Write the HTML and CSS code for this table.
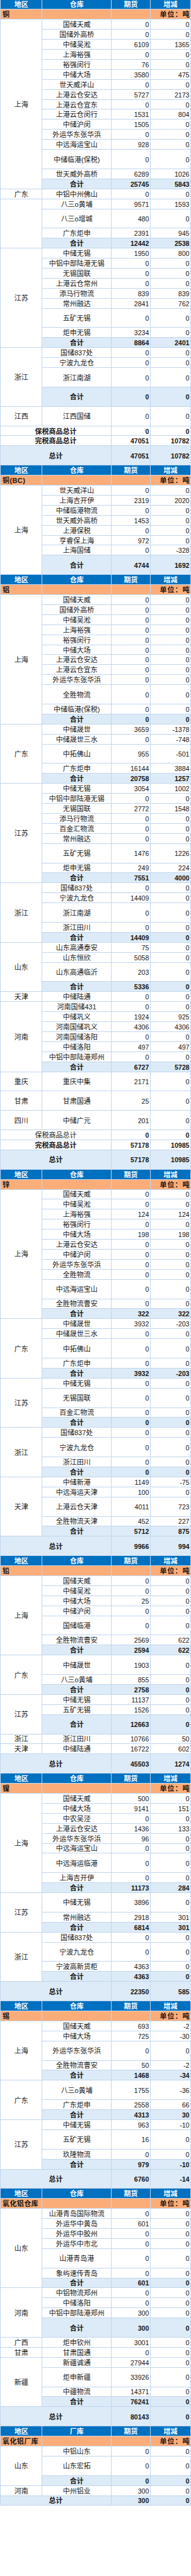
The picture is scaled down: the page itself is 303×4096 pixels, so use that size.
FILE: index.html
```html
<!DOCTYPE html>
<html lang="zh-CN">
<head>
<meta charset="utf-8">
<title>库存</title>
<link rel="stylesheet" href="styles.css">
</head>
<body>
<table class="t">
<colgroup><col class="c1"><col class="c2"><col class="c3"><col class="c4"></colgroup>
<tbody>
<tr class="h"><th>地区</th><th>仓库</th><th>期货</th><th>增减</th></tr>
<tr class="ti"><td class="tl">铜</td><td></td><td></td><td class="u">单位：吨</td></tr>
<tr><td class="r" rowspan="16">上海</td><td class="w">国储天威</td><td>0</td><td>0</td></tr>
<tr><td class="w">国储外高桥</td><td>0</td><td>0</td></tr>
<tr><td class="w">中储吴淞</td><td>6109</td><td>1365</td></tr>
<tr><td class="w">上海裕强</td><td>0</td><td>0</td></tr>
<tr><td class="w">裕强闵行</td><td>76</td><td>0</td></tr>
<tr><td class="w">中储大场</td><td>3580</td><td>475</td></tr>
<tr><td class="w">世天威洋山</td><td>0</td><td>0</td></tr>
<tr><td class="w">上港云仓安达</td><td>5727</td><td>2173</td></tr>
<tr><td class="w">上港云仓宜东</td><td>0</td><td>0</td></tr>
<tr><td class="w">上港云仓闵行</td><td>1531</td><td>804</td></tr>
<tr><td class="w">中储沪闵</td><td>1505</td><td>0</td></tr>
<tr><td class="w">外运华东张华浜</td><td>0</td><td>0</td></tr>
<tr><td class="w">中远海运宝山</td><td>928</td><td>0</td></tr>
<tr class="x"><td class="w">中储临港(保税)</td><td>0</td><td>0</td></tr>
<tr><td class="w">世天威外高桥</td><td>6289</td><td>1026</td></tr>
<tr class="s"><td class="w">合计</td><td>25745</td><td>5843</td></tr>
<tr><td class="r">广东</td><td class="w">中铝中州佛山</td><td>0</td><td>0</td></tr>
<tr><td class="r" rowspan="4"></td><td class="w">八三o黄埔</td><td>9571</td><td>1593</td></tr>
<tr class="x"><td class="w">八三o增城</td><td>480</td><td>0</td></tr>
<tr><td class="w">广东炬申</td><td>2391</td><td>945</td></tr>
<tr class="s"><td class="w">合计</td><td>12442</td><td>2538</td></tr>
<tr><td class="r" rowspan="9">江苏</td><td class="w">中储无锡</td><td>1950</td><td>800</td></tr>
<tr><td class="w">中铝中部陆港无锡</td><td>0</td><td>0</td></tr>
<tr><td class="w">无锡国联</td><td>0</td><td>0</td></tr>
<tr><td class="w">上港云仓常州</td><td>0</td><td>0</td></tr>
<tr><td class="w">添马行物流</td><td>839</td><td>839</td></tr>
<tr><td class="w">常州融达</td><td>2841</td><td>762</td></tr>
<tr class="x"><td class="w">五矿无锡</td><td>0</td><td>0</td></tr>
<tr><td class="w">炬申无锡</td><td>3234</td><td>0</td></tr>
<tr class="s"><td class="w">合计</td><td>8864</td><td>2401</td></tr>
<tr><td class="r" rowspan="4">浙江</td><td class="w">国储837处</td><td>0</td><td>0</td></tr>
<tr><td class="w">宁波九龙仓</td><td>0</td><td>0</td></tr>
<tr class="x"><td class="w">浙江南湖</td><td>0</td><td>0</td></tr>
<tr class="s x"><td class="w">合计</td><td>0</td><td>0</td></tr>
<tr class="x"><td class="r">江西</td><td class="w">江西国储</td><td>0</td><td>0</td></tr>
<tr class="b"><td class="w" colspan="2">保税商品总计</td><td>0</td><td>0</td></tr>
<tr class="b"><td class="w" colspan="2">完税商品总计</td><td>47051</td><td>10782</td></tr>
<tr class="z x"><td class="w" colspan="2">总计</td><td>47051</td><td>10782</td></tr>

<tr class="h"><th>地区</th><th>仓库</th><th>期货</th><th>增减</th></tr>
<tr class="ti"><td class="tl">铜(BC)</td><td></td><td></td><td class="u">单位：吨</td></tr>
<tr><td class="r" rowspan="8">上海</td><td class="w">世天威洋山</td><td>0</td><td>0</td></tr>
<tr><td class="w">上海吉开伊</td><td>2319</td><td>2020</td></tr>
<tr><td class="w">中储临港物流</td><td>0</td><td>0</td></tr>
<tr><td class="w">世天威外高桥</td><td>1453</td><td>0</td></tr>
<tr><td class="w">上港保税</td><td>0</td><td>0</td></tr>
<tr><td class="w">亨睿保上海</td><td>972</td><td>0</td></tr>
<tr><td class="w">上海国储</td><td>0</td><td>-328</td></tr>
<tr class="s x"><td class="w">合计</td><td>4744</td><td>1692</td></tr>

<tr class="h"><th>地区</th><th>仓库</th><th>期货</th><th>增减</th></tr>
<tr class="ti"><td class="tl">铝</td><td></td><td></td><td class="u">单位：吨</td></tr>
<tr><td class="r" rowspan="12">上海</td><td class="w">国储天威</td><td>0</td><td>0</td></tr>
<tr><td class="w">国储外高桥</td><td>0</td><td>0</td></tr>
<tr><td class="w">中储吴淞</td><td>0</td><td>0</td></tr>
<tr><td class="w">上海裕强</td><td>0</td><td>0</td></tr>
<tr><td class="w">裕强闵行</td><td>0</td><td>0</td></tr>
<tr><td class="w">中储大场</td><td>0</td><td>0</td></tr>
<tr><td class="w">上港云仓安达</td><td>0</td><td>0</td></tr>
<tr><td class="w">上港云仓宜东</td><td>0</td><td>0</td></tr>
<tr><td class="w">外运华东张华浜</td><td>0</td><td>0</td></tr>
<tr class="x"><td class="w">全胜物流</td><td>0</td><td>0</td></tr>
<tr><td class="w">中储临港(保税)</td><td>0</td><td>0</td></tr>
<tr class="s"><td class="w">合计</td><td>0</td><td>0</td></tr>
<tr><td class="r" rowspan="5">广东</td><td class="w">中储晟世</td><td>3659</td><td>-1378</td></tr>
<tr><td class="w">中储晟世三水</td><td>0</td><td>-748</td></tr>
<tr class="x"><td class="w">中拓佛山</td><td>955</td><td>-501</td></tr>
<tr><td class="w">广东炬申</td><td>16144</td><td>3884</td></tr>
<tr class="s"><td class="w">合计</td><td>20758</td><td>1257</td></tr>
<tr><td class="r" rowspan="9">江苏</td><td class="w">中储无锡</td><td>3054</td><td>1002</td></tr>
<tr><td class="w">中铝中部陆港无锡</td><td>0</td><td>0</td></tr>
<tr><td class="w">无锡国联</td><td>2772</td><td>1548</td></tr>
<tr><td class="w">添马行物流</td><td>0</td><td>0</td></tr>
<tr><td class="w">百金汇物流</td><td>0</td><td>0</td></tr>
<tr><td class="w">常州融达</td><td>0</td><td>0</td></tr>
<tr class="x"><td class="w">五矿无锡</td><td>1476</td><td>1226</td></tr>
<tr><td class="w">炬申无锡</td><td>249</td><td>224</td></tr>
<tr class="s"><td class="w">合计</td><td>7551</td><td>4000</td></tr>
<tr><td class="r" rowspan="5">浙江</td><td class="w">国储837处</td><td>0</td><td>0</td></tr>
<tr><td class="w">宁波九龙仓</td><td>14409</td><td>0</td></tr>
<tr class="x"><td class="w">浙江南湖</td><td>0</td><td>0</td></tr>
<tr><td class="w">浙江田川</td><td>0</td><td>0</td></tr>
<tr class="s"><td class="w">合计</td><td>14409</td><td>0</td></tr>
<tr><td class="r" rowspan="4">山东</td><td class="w">山东高通泰安</td><td>75</td><td>0</td></tr>
<tr><td class="w">山东恒欣</td><td>5058</td><td>0</td></tr>
<tr class="x"><td class="w">山东高通临沂</td><td>203</td><td>0</td></tr>
<tr class="s"><td class="w">合计</td><td>5336</td><td>0</td></tr>
<tr><td class="r">天津</td><td class="w">中储陆通</td><td>0</td><td>0</td></tr>
<tr><td class="r" rowspan="7">河南</td><td class="w">河南国储431</td><td>0</td><td>0</td></tr>
<tr><td class="w">中储巩义</td><td>1924</td><td>925</td></tr>
<tr><td class="w">河南国储巩义</td><td>4306</td><td>4306</td></tr>
<tr><td class="w">河南国储洛阳</td><td>0</td><td>0</td></tr>
<tr><td class="w">中储洛阳</td><td>497</td><td>497</td></tr>
<tr><td class="w">中铝中部陆港郑州</td><td>0</td><td>0</td></tr>
<tr class="s"><td class="w">合计</td><td>6727</td><td>5728</td></tr>
<tr class="x"><td class="r">重庆</td><td class="w">重庆中集</td><td>2171</td><td>0</td></tr>
<tr class="x"><td class="r">甘肃</td><td class="w">甘肃国通</td><td>25</td><td>0</td></tr>
<tr class="x"><td class="r">四川</td><td class="w">中储广元</td><td>201</td><td>0</td></tr>
<tr class="b"><td class="w nb" colspan="2">保税商品总计</td><td>0</td><td>0</td></tr>
<tr class="b"><td class="w" colspan="2">完税商品总计</td><td>57178</td><td>10985</td></tr>
<tr class="z x"><td class="w" colspan="2">总计</td><td>57178</td><td>10985</td></tr>

<tr class="h"><th>地区</th><th>仓库</th><th>期货</th><th>增减</th></tr>
<tr class="ti"><td class="tl">锌</td><td></td><td></td><td class="u">单位：吨</td></tr>
<tr><td class="r" rowspan="12">上海</td><td class="w">国储天威</td><td>0</td><td>0</td></tr>
<tr><td class="w">中储吴淞</td><td>0</td><td>0</td></tr>
<tr><td class="w">上海裕强</td><td>124</td><td>124</td></tr>
<tr><td class="w">裕强闵行</td><td>0</td><td>0</td></tr>
<tr><td class="w">中储大场</td><td>198</td><td>198</td></tr>
<tr><td class="w">上港云仓安达</td><td>0</td><td>0</td></tr>
<tr><td class="w">中储沪闵</td><td>0</td><td>0</td></tr>
<tr><td class="w">外运华东张华浜</td><td>0</td><td>0</td></tr>
<tr><td class="w">全胜物流</td><td>0</td><td>0</td></tr>
<tr class="x"><td class="w">中远海运宝山</td><td>0</td><td>0</td></tr>
<tr><td class="w">全胜物流曹安</td><td>0</td><td>0</td></tr>
<tr class="s"><td class="w">合计</td><td>322</td><td>322</td></tr>
<tr><td class="r" rowspan="5">广东</td><td class="w">中储晟世</td><td>3932</td><td>-203</td></tr>
<tr><td class="w">中储晟世三水</td><td>0</td><td>0</td></tr>
<tr class="x"><td class="w">中拓佛山</td><td>0</td><td>0</td></tr>
<tr><td class="w">广东炬申</td><td>0</td><td>0</td></tr>
<tr class="s"><td class="w">合计</td><td>3932</td><td>-203</td></tr>
<tr><td class="r" rowspan="4">江苏</td><td class="w">中储无锡</td><td>0</td><td>0</td></tr>
<tr class="x"><td class="w">无锡国联</td><td>0</td><td>0</td></tr>
<tr><td class="w">百金汇物流</td><td>0</td><td>0</td></tr>
<tr class="s"><td class="w">合计</td><td>0</td><td>0</td></tr>
<tr><td class="r" rowspan="4">浙江</td><td class="w">国储837处</td><td>0</td><td>0</td></tr>
<tr class="x"><td class="w">宁波九龙仓</td><td>0</td><td>0</td></tr>
<tr><td class="w">浙江田川</td><td>0</td><td>0</td></tr>
<tr class="s"><td class="w">合计</td><td>0</td><td>0</td></tr>
<tr><td class="r" rowspan="5">天津</td><td class="w">中储新港</td><td>1149</td><td>-75</td></tr>
<tr><td class="w">中远海运天津</td><td>100</td><td>0</td></tr>
<tr class="x"><td class="w">上港云仓天津</td><td>4011</td><td>723</td></tr>
<tr><td class="w">全胜物流天津</td><td>452</td><td>227</td></tr>
<tr class="s"><td class="w">合计</td><td>5712</td><td>875</td></tr>
<tr class="z x"><td class="w" colspan="2">总计</td><td>9966</td><td>994</td></tr>

<tr class="h"><th>地区</th><th>仓库</th><th>期货</th><th>增减</th></tr>
<tr class="ti"><td class="tl">铅</td><td></td><td></td><td class="u">单位：吨</td></tr>
<tr><td class="r" rowspan="7">上海</td><td class="w">国储天威</td><td>0</td><td>0</td></tr>
<tr><td class="w">中储吴淞</td><td>0</td><td>0</td></tr>
<tr><td class="w">中储大场</td><td>25</td><td>0</td></tr>
<tr><td class="w">中储沪闵</td><td>0</td><td>0</td></tr>
<tr class="x"><td class="w">国储临港</td><td>0</td><td>0</td></tr>
<tr><td class="w">全胜物流曹安</td><td>2569</td><td>622</td></tr>
<tr class="s"><td class="w">合计</td><td>2594</td><td>622</td></tr>
<tr class="x"><td class="r" rowspan="3">广东</td><td class="w">中储晟世</td><td>1903</td><td>0</td></tr>
<tr><td class="w">八三o黄埔</td><td>855</td><td>0</td></tr>
<tr class="s"><td class="w">合计</td><td>2758</td><td>0</td></tr>
<tr><td class="r" rowspan="3">江苏</td><td class="w">中储无锡</td><td>11137</td><td>0</td></tr>
<tr><td class="w">五矿无锡</td><td>1526</td><td>0</td></tr>
<tr class="s x"><td class="w">合计</td><td>12663</td><td>0</td></tr>
<tr><td class="r">浙江</td><td class="w">浙江田川</td><td>10766</td><td>50</td></tr>
<tr><td class="r">天津</td><td class="w">中储陆通</td><td>16722</td><td>602</td></tr>
<tr class="z x"><td class="w" colspan="2">总计</td><td>45503</td><td>1274</td></tr>

<tr class="h"><th>地区</th><th>仓库</th><th>期货</th><th>增减</th></tr>
<tr class="ti"><td class="tl">镍</td><td></td><td></td><td class="u">单位：吨</td></tr>
<tr><td class="r" rowspan="9">上海</td><td class="w">国储天威</td><td>500</td><td>0</td></tr>
<tr><td class="w">中储大场</td><td>9141</td><td>151</td></tr>
<tr><td class="w">中农吴泾</td><td>0</td><td>0</td></tr>
<tr><td class="w">上港云仓安达</td><td>1436</td><td>133</td></tr>
<tr><td class="w">外运华东张华浜</td><td>96</td><td>0</td></tr>
<tr><td class="w">中远海运宝山</td><td>0</td><td>0</td></tr>
<tr class="x"><td class="w">中远海运临港</td><td>0</td><td>0</td></tr>
<tr><td class="w">上海吉开伊</td><td>0</td><td>0</td></tr>
<tr class="s"><td class="w">合计</td><td>11173</td><td>284</td></tr>
<tr class="x"><td class="r" rowspan="3">江苏</td><td class="w">中储无锡</td><td>3896</td><td>0</td></tr>
<tr><td class="w">常州融达</td><td>2918</td><td>301</td></tr>
<tr class="s"><td class="w">合计</td><td>6814</td><td>301</td></tr>
<tr><td class="r" rowspan="4">浙江</td><td class="w">国储837处</td><td>0</td><td>0</td></tr>
<tr class="x"><td class="w">宁波九龙仓</td><td>0</td><td>0</td></tr>
<tr><td class="w">宁波高新货柜</td><td>4363</td><td>0</td></tr>
<tr class="s"><td class="w">合计</td><td>4363</td><td>0</td></tr>
<tr class="z x"><td class="w" colspan="2">总计</td><td>22350</td><td>585</td></tr>

<tr class="h"><th>地区</th><th>仓库</th><th>期货</th><th>增减</th></tr>
<tr class="ti"><td class="tl">锡</td><td></td><td></td><td class="u">单位：吨</td></tr>
<tr><td class="r" rowspan="5">上海</td><td class="w">国储天威</td><td>693</td><td>-2</td></tr>
<tr><td class="w">中储大场</td><td>725</td><td>-30</td></tr>
<tr class="x"><td class="w">外运华东张华浜</td><td>0</td><td>0</td></tr>
<tr><td class="w">全胜物流曹安</td><td>50</td><td>-2</td></tr>
<tr class="s"><td class="w">合计</td><td>1468</td><td>-34</td></tr>
<tr class="x"><td class="r" rowspan="3">广东</td><td class="w">八三o黄埔</td><td>1755</td><td>-36</td></tr>
<tr><td class="w">广东炬申</td><td>2558</td><td>66</td></tr>
<tr class="s"><td class="w">合计</td><td>4313</td><td>30</td></tr>
<tr><td class="r" rowspan="4">江苏</td><td class="w">中储无锡</td><td>963</td><td>-10</td></tr>
<tr class="x"><td class="w">五矿无锡</td><td>16</td><td>0</td></tr>
<tr><td class="w">玖隆物流</td><td>0</td><td>0</td></tr>
<tr class="s"><td class="w">合计</td><td>979</td><td>-10</td></tr>
<tr class="z x"><td class="w" colspan="2">总计</td><td>6760</td><td>-14</td></tr>

<tr class="h"><th>地区</th><th>仓库</th><th>期货</th><th>增减</th></tr>
<tr class="ti"><td class="tl">氧化铝仓库</td><td></td><td></td><td class="u">单位：吨</td></tr>
<tr><td class="r" rowspan="7">山东</td><td class="w">山港青岛国际物流</td><td>0</td><td>0</td></tr>
<tr><td class="w">外运华中黄岛</td><td>601</td><td>0</td></tr>
<tr><td class="w">外运华中胶州</td><td>0</td><td>0</td></tr>
<tr><td class="w">外运华中市北</td><td>0</td><td>0</td></tr>
<tr class="x"><td class="w">山港青岛港</td><td>0</td><td>0</td></tr>
<tr><td class="w">象屿速传青岛</td><td>0</td><td>0</td></tr>
<tr class="s"><td class="w">合计</td><td>601</td><td>0</td></tr>
<tr><td class="r" rowspan="4">河南</td><td class="w">中铝物流郑州</td><td>0</td><td>0</td></tr>
<tr><td class="w">中储洛阳</td><td>0</td><td>0</td></tr>
<tr><td class="w">中铝中部陆港郑州</td><td>300</td><td>0</td></tr>
<tr class="s x"><td class="w">合计</td><td>300</td><td>0</td></tr>
<tr><td class="r">广西</td><td class="w">炬申钦州</td><td>3001</td><td>0</td></tr>
<tr><td class="r">甘肃</td><td class="w">甘肃国通</td><td>0</td><td>0</td></tr>
<tr><td class="r" rowspan="4">新疆</td><td class="w">新疆诚通</td><td>27944</td><td>0</td></tr>
<tr class="x"><td class="w">炬申新疆</td><td>33926</td><td>0</td></tr>
<tr><td class="w">中疆物流</td><td>14371</td><td>0</td></tr>
<tr class="s"><td class="w">合计</td><td>76241</td><td>0</td></tr>
<tr class="z x"><td class="w" colspan="2">总计</td><td>80143</td><td>0</td></tr>

<tr class="h"><th>地区</th><th>厂库</th><th>期货</th><th>增减</th></tr>
<tr class="ti"><td class="tl">氧化铝厂库</td><td></td><td></td><td class="u">单位：吨</td></tr>
<tr><td class="r" rowspan="3">山东</td><td class="w">中铝山东</td><td>0</td><td>0</td></tr>
<tr class="x"><td class="w">山东宏拓</td><td>0</td><td>0</td></tr>
<tr class="s"><td class="w">合计</td><td>0</td><td>0</td></tr>
<tr><td class="r">河南</td><td class="w">中州铝业</td><td>300</td><td>0</td></tr>
<tr class="z"><td class="w" colspan="2">总计</td><td>300</td><td>0</td></tr>
</tbody>
</table>
</body>
</html>
```

FILE: styles.css
```css
html, body {
  margin: 0;
  padding: 0;
  background: #ffffff;
}

.t {
  border-collapse: separate;
  border-spacing: 1.492px;
  background: #c2d6ee;
  table-layout: fixed;
  width: 303px;
  margin-top: -1.492px;
  font-family: "Liberation Sans", "Noto Sans CJK SC", sans-serif;
  font-size: 10.6px;
  color: #161616;
}

.c1 { width: 64.9px; }
.c2 { width: 107.6px; }
.c3 { width: 60.4px; }
.c4 { width: 62.6px; }

.t tr { height: 14.92px; }
.t tr.x { height: 29.84px; }

.t td,
.t th {
  padding: 1px 1.5px 0 0;
  line-height: 12px;
  vertical-align: middle;
  white-space: nowrap;
  overflow: hidden;
  background: #ffffff;
  text-align: right;
}

.t td.w,
.t td.r {
  text-align: center;
  padding-right: 0;
  font-size: 11px;
}

.t th {
  background: #0070c0;
  color: #ffffff;
  font-weight: bold;
  font-size: 11px;
  text-align: center;
  padding-right: 0;
}

.t tr.ti td {
  background: #fbad79;
  font-weight: bold;
  font-size: 11px;
}

.t td.tl {
  text-align: left;
  padding-left: 3px;
  letter-spacing: 0.4px;
}

.t td.u {
  letter-spacing: 1px;
  padding-right: 0.5px;
}

.t tr.s td,
.t tr.z td {
  background: #dcebf7;
  font-weight: bold;
}

.t tr.b td {
  font-weight: bold;
}

.t tr.b td.nb {
  font-weight: normal;
}
```
